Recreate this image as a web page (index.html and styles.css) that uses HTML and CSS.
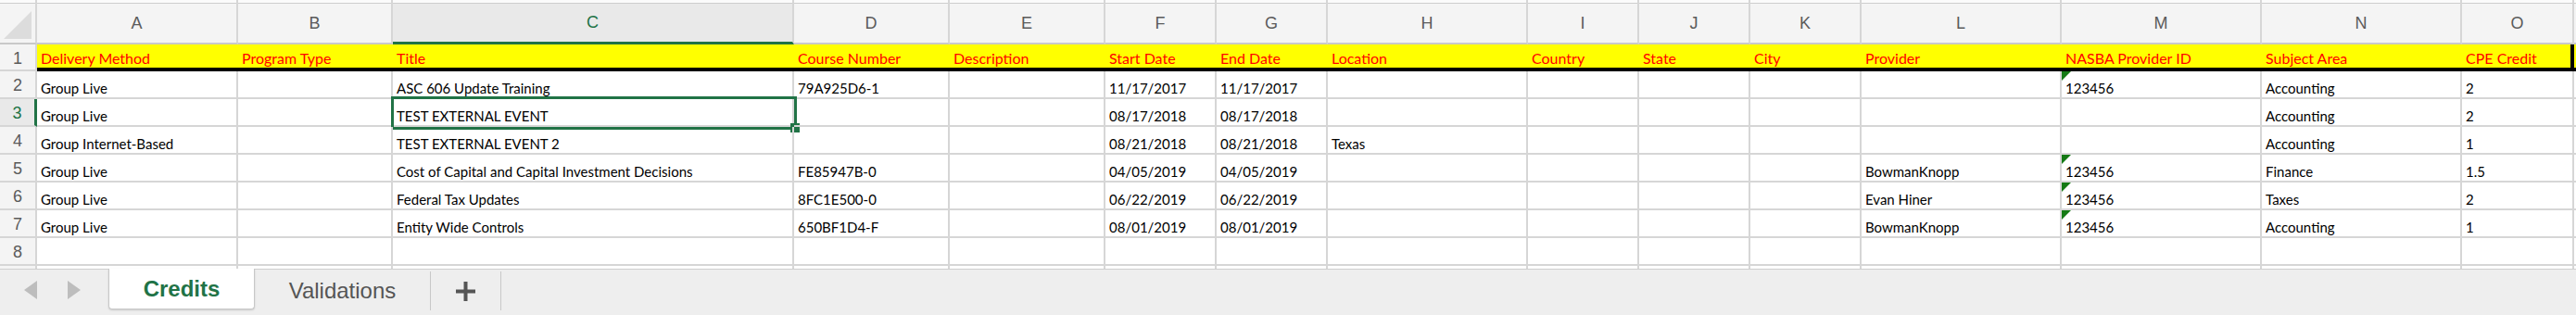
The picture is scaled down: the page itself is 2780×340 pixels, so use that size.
FILE: index.html
```html
<!DOCTYPE html>
<html lang="en">
<head>
    <meta charset="UTF-8">
    <title>Credits</title>
    <link rel="stylesheet" href="styles.css">
</head>
<body>
    <div class="sheet">
        <div class="grid" id="grid"></div>
    </div>

    <div class="tabbar">
        <div class="nav">
            <svg width="14" height="20" viewBox="0 0 14 20"><polygon points="14,0 14,20 0,10" fill="#bdbdbd"/></svg>
            <svg width="14" height="20" viewBox="0 0 14 20"><polygon points="0,0 0,20 14,10" fill="#bdbdbd"/></svg>
        </div>
        <div class="tab active">Credits</div>
        <div class="tab">Validations</div>
        <div class="tab add">
            <svg width="21" height="21" viewBox="0 0 21 21"><rect x="8.5" y="0" width="4" height="21" fill="#555"/><rect x="0" y="8.5" width="21" height="4" fill="#555"/></svg>
        </div>
    </div>

    <script>
        const letters = ['A','B','C','D','E','F','G','H','I','J','K','L','M','N','O',''];

        const headers = ['Delivery Method', 'Program Type', 'Title', 'Course Number', 'Description',
            'Start Date', 'End Date', 'Location', 'Country', 'State', 'City', 'Provider',
            'NASBA Provider ID', 'Subject Area', 'CPE Credit', ''];

        // '!' in front of a value marks the green error flag
        const rows = [
            ['Group Live', '', 'ASC 606 Update Training', '79A925D6-1', '', '11/17/2017', '11/17/2017', '', '', '', '', '', '!123456', 'Accounting', '2', ''],
            ['Group Live', '', 'TEST EXTERNAL EVENT', '', '', '08/17/2018', '08/17/2018', '', '', '', '', '', '', 'Accounting', '2', ''],
            ['Group Internet-Based', '', 'TEST EXTERNAL EVENT 2', '', '', '08/21/2018', '08/21/2018', 'Texas', '', '', '', '', '', 'Accounting', '1', ''],
            ['Group Live', '', 'Cost of Capital and Capital Investment Decisions', 'FE85947B-0', '', '04/05/2019', '04/05/2019', '', '', '', '', 'BowmanKnopp', '!123456', 'Finance', '1.5', ''],
            ['Group Live', '', 'Federal Tax Updates', '8FC1E500-0', '', '06/22/2019', '06/22/2019', '', '', '', '', 'Evan Hiner', '!123456', 'Taxes', '2', ''],
            ['Group Live', '', 'Entity Wide Controls', '650BF1D4-F', '', '08/01/2019', '08/01/2019', '', '', '', '', 'BowmanKnopp', '!123456', 'Accounting', '1', ''],
            new Array(16).fill('')
        ];

        const grid = document.getElementById('grid');
        const selectedRow = 3;
        const selectedCol = 2;

        function addCell(className, text) {
            const cell = document.createElement('div');
            cell.className = className;
            if (text) cell.textContent = text;
            grid.appendChild(cell);
            return cell;
        }

        // Column letters
        addCell('corner');
        letters.forEach((letter, i) => {
            addCell('colhead' + (i === selectedCol ? ' current' : ''), letter);
        });

        // Header row (row 1)
        addCell('rowhead', '1');
        headers.forEach((text, i) => {
            addCell('cell title' + (i === 14 ? ' last' : ''), text);
        });

        // Data rows
        rows.forEach((row, r) => {
            const num = r + 2;
            addCell('rowhead' + (num === selectedRow ? ' current' : ''), String(num));
            row.forEach((value, c) => {
                const flagged = value.startsWith('!');
                const cell = addCell('cell', flagged ? value.slice(1) : value);
                if (flagged) {
                    const flag = document.createElement('span');
                    flag.className = 'flag';
                    cell.appendChild(flag);
                }
                if (num === selectedRow && c === selectedCol) {
                    const sel = document.createElement('div');
                    sel.className = 'selection';
                    sel.innerHTML = '<span class="handle"></span>';
                    cell.appendChild(sel);
                }
            });
        });

        // Row 9 is cut by the tab bar: grid lines only
        addCell('rowhead');
        for (let i = 0; i < 16; i++) addCell('cell');
    </script>
</body>
</html>
```

FILE: styles.css
```css
body {
    margin: 0;
    width: 2780px;
    height: 340px;
    overflow: hidden;
    background-color: #ffffff;
    font-family: Lato, "Open Sans", sans-serif;
}

.sheet {
    height: 290px;
    overflow: hidden;
}

.grid {
    display: grid;
    grid-template-columns: 40px 217px 167px 433px 168px 168px 120px 120px 216px 120px 120px 120px 216px 216px 216px 121px 1fr;
    grid-template-rows: 48px 29px repeat(8, 30px);
}

.corner,
.colhead,
.rowhead {
    box-sizing: border-box;
    display: flex;
    align-items: center;
    justify-content: center;
    font-family: "Liberation Sans", Arial, sans-serif;
    color: #5b5b5b;
    background-color: #f4f4f4;
    border-right: 2px solid #d6d6d6;
    border-bottom: 2px solid #d6d6d6;
}

.corner,
.colhead {
    font-size: 18px;
    padding-top: 4px;
    background: linear-gradient(#fbfbfb 0 3px, #cdcdcd 3px 4px, #f4f4f4 4px);
    border-bottom-color: #c9c9c9;
}

.corner {
    position: relative;
}

.corner::after {
    content: "";
    position: absolute;
    right: 4px;
    bottom: 4px;
    border-bottom: 30px solid #dcdcdc;
    border-left: 30px solid transparent;
}

.colhead.current {
    color: #217346;
    background: linear-gradient(#fbfbfb 0 3px, #cdcdcd 3px 4px, #e9e9e9 4px);
    border-bottom: 3px solid #217346;
}

.rowhead {
    font-size: 18px;
    padding-top: 3px;
}

.rowhead.current {
    color: #217346;
    background-color: #e9e9e9;
    border-right: 3px solid #217346;
}

.cell {
    position: relative;
    box-sizing: border-box;
    display: flex;
    align-items: flex-end;
    padding: 0 4px 1px;
    font-size: 15px;
    line-height: 18px;
    color: #000000;
    white-space: nowrap;
    border-right: 2px solid #d6d6d6;
    border-bottom: 2px solid #d6d6d6;
}

.cell.title {
    font-size: 16px;
    color: #ff0000;
    background-color: #ffff00;
    border-right: none;
    border-bottom: 4px solid #000000;
}

.cell.title.last {
    border-right: 4px solid #000000;
}

.flag {
    position: absolute;
    left: 0;
    top: 0;
    border-top: 10px solid #157a15;
    border-right: 10px solid transparent;
}

.selection {
    position: absolute;
    left: -2px;
    top: -3px;
    width: 438px;
    height: 36px;
    box-sizing: border-box;
    border: 3px solid #217346;
}

.handle {
    position: absolute;
    right: -6px;
    bottom: -6px;
    width: 10px;
    height: 10px;
    background-color: #217346;
}

.tabbar {
    height: 50px;
    box-sizing: border-box;
    display: flex;
    background-color: #eeeeee;
    border-top: 1px solid #cfcfcf;
    font-family: "Liberation Sans", Arial, sans-serif;
    font-size: 24px;
}

.nav {
    width: 117px;
    display: flex;
    align-items: center;
    gap: 33px;
    padding: 0 0 6px 26px;
    box-sizing: border-box;
}

.tab {
    display: flex;
    align-items: center;
    justify-content: center;
    color: #555555;
    width: 190px;
    height: 42px;
    margin-top: 2px;
    box-sizing: border-box;
    border-right: 1px solid #c8c8c8;
}

.tab.active {
    width: 158px;
    height: 44px;
    margin-top: -1px;
    font-weight: bold;
    color: #217346;
    background-color: #ffffff;
    border: 1px solid #c8c8c8;
    border-top: none;
    border-radius: 0 0 4px 4px;
    box-shadow: 0 1px 2px rgba(0, 0, 0, 0.15);
}

.tab.add {
    width: 76px;
}
```
